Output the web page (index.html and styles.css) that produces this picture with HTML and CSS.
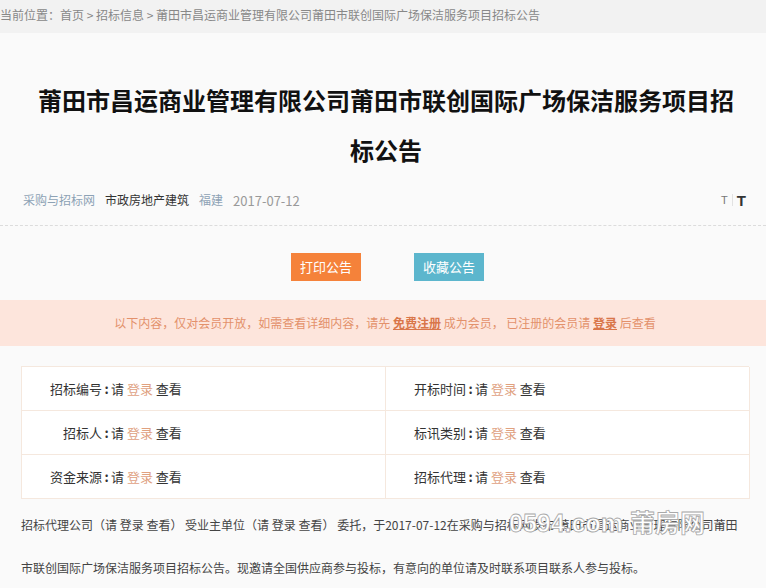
FILE: index.html
```html
<!DOCTYPE html>
<html lang="zh-CN">
<head>
<meta charset="utf-8">
<link rel="stylesheet" href="styles.css">
</head>
<body>
<div class="crumb">当前位置：首页 &gt; 招标信息 &gt; 莆田市昌运商业管理有限公司莆田市联创国际广场保洁服务项目招标公告</div>
<div class="page">
  <h1 class="title">莆田市昌运商业管理有限公司莆田市联创国际广场保洁服务项目招标公告</h1>
  <div class="meta">
    <div class="meta-left">
      <span class="m-blue">采购与招标网</span>
      <span class="m-dark">市政房地产建筑</span>
      <span class="m-blue">福建</span>
      <span class="m-gray">2017-07-12</span>
    </div>
    <div class="fontsize"><span class="t-small">T</span><span class="t-sep"></span><span class="t-big">T</span></div>
  </div>
  <div class="actions">
    <span class="btn btn-print">打印公告</span>
    <span class="btn btn-fav">收藏公告</span>
  </div>
  <div class="notice">以下内容，仅对会员开放，如需查看详细内容，请先 <b>免费注册</b> 成为会员， 已注册的会员请 <b>登录</b> 后查看</div>
  <div class="info">
    <div class="cell"><span class="lbl">招标编号</span><span class="colon">:</span>请 <span class="login">登录</span> 查看</div>
    <div class="cell"><span class="lbl">开标时间</span><span class="colon">:</span>请 <span class="login">登录</span> 查看</div>
    <div class="cell"><span class="lbl">招标人</span><span class="colon">:</span>请 <span class="login">登录</span> 查看</div>
    <div class="cell"><span class="lbl">标讯类别</span><span class="colon">:</span>请 <span class="login">登录</span> 查看</div>
    <div class="cell"><span class="lbl">资金来源</span><span class="colon">:</span>请 <span class="login">登录</span> 查看</div>
    <div class="cell"><span class="lbl">招标代理</span><span class="colon">:</span>请 <span class="login">登录</span> 查看</div>
  </div>
  <p class="body">招标代理公司（请 登录 查看） 受业主单位（请 登录 查看） 委托，于2017-07-12在采购与招标网发布 莆田市昌运商业管理有限公司莆田<br>市联创国际广场保洁服务项目招标公告。现邀请全国供应商参与投标，有意向的单位请及时联系项目联系人参与投标。</p>
  <div class="watermark">0594.com 莆房网</div>
</div>
</body>
</html>
```
FILE: styles.css
```css
html, body {
  margin: 0;
  padding: 0;
  background: #fafafa;
  font-family: "Microsoft YaHei", "Noto Sans CJK SC", sans-serif;
}
.crumb {
  height: 33px;
  line-height: 30px;
  background: #f2f2f2;
  color: #888;
  font-size: 12px;
  white-space: nowrap;
  overflow: hidden;
}
.page {
  position: relative;
  background: #fafafa;
  overflow: hidden;
}
.title {
  margin: 0;
  padding: 42px 30px 0 36px;
  font-size: 24px;
  line-height: 50px;
  font-weight: bold;
  color: #111;
  text-align: center;
}
.meta {
  display: flex;
  justify-content: space-between;
  align-items: center;
  height: 24px;
  margin-top: 13px;
  padding: 0 20px 13px 23px;
  border-bottom: 1px dashed #dcdcdc;
  font-size: 12px;
}
.meta-left {
  display: flex;
  gap: 10px;
}
.m-blue { color: #8da2b5; }
.m-dark { color: #333; }
.m-gray { color: #999; font-size: 13px; }
.fontsize {
  display: flex;
  align-items: center;
  gap: 4px;
}
.t-small { font-family: "Liberation Sans", sans-serif; font-size: 11px; color: #777; }
.t-sep { width: 1px; height: 12px; background: #e2e2e2; }
.t-big { font-family: "Liberation Sans", sans-serif; font-size: 15px; font-weight: bold; color: #333; }
.actions {
  display: flex;
  justify-content: center;
  gap: 53px;
  margin-top: 27px;
  padding-left: 9px;
}
.btn {
  display: block;
  width: 70px;
  height: 28px;
  line-height: 28px;
  text-align: center;
  color: #fff;
  font-size: 13px;
}
.btn-print { background: #f5823a; }
.btn-fav { background: #5cb6cd; }
.notice {
  margin-top: 19px;
  height: 46px;
  line-height: 46px;
  background: #fde5dc;
  color: #e3916b;
  font-size: 12px;
  text-align: center;
  padding-left: 4px;
}
.notice b {
  color: #d9764a;
  text-decoration: underline;
}
.info {
  display: grid;
  grid-template-columns: 364px 364px;
  margin: 20px 0 0 21px;
  width: 728px;
  border-top: 1px solid #f5e8de;
  border-left: 1px solid #f5e8de;
  background: #fff;
  box-sizing: border-box;
}
.cell {
  height: 44px;
  line-height: 43px;
  box-sizing: border-box;
  border-right: 1px solid #f5e8de;
  border-bottom: 1px solid #f5e8de;
  font-size: 13px;
  color: #333;
  padding-left: 28px;
  white-space: nowrap;
}
.lbl {
  display: inline-block;
  width: 52px;
  text-align: right;
}
.colon {
  display: inline-block;
  width: 9px;
  text-align: center;
  font-weight: bold;
}
.login { color: #e0a17f; }
.body {
  margin: 4px 0 0 21px;
  font-size: 12px;
  line-height: 43px;
  color: #444;
  white-space: nowrap;
}
.watermark {
  position: absolute;
  left: 509px;
  top: 470px;
  font-family: "Liberation Sans", "Noto Sans CJK SC", sans-serif;
  font-size: 25px;
  font-weight: bold;
  color: #fff;
  -webkit-text-stroke: 0.8px #a9a9a9;
  pointer-events: none;
}
```
